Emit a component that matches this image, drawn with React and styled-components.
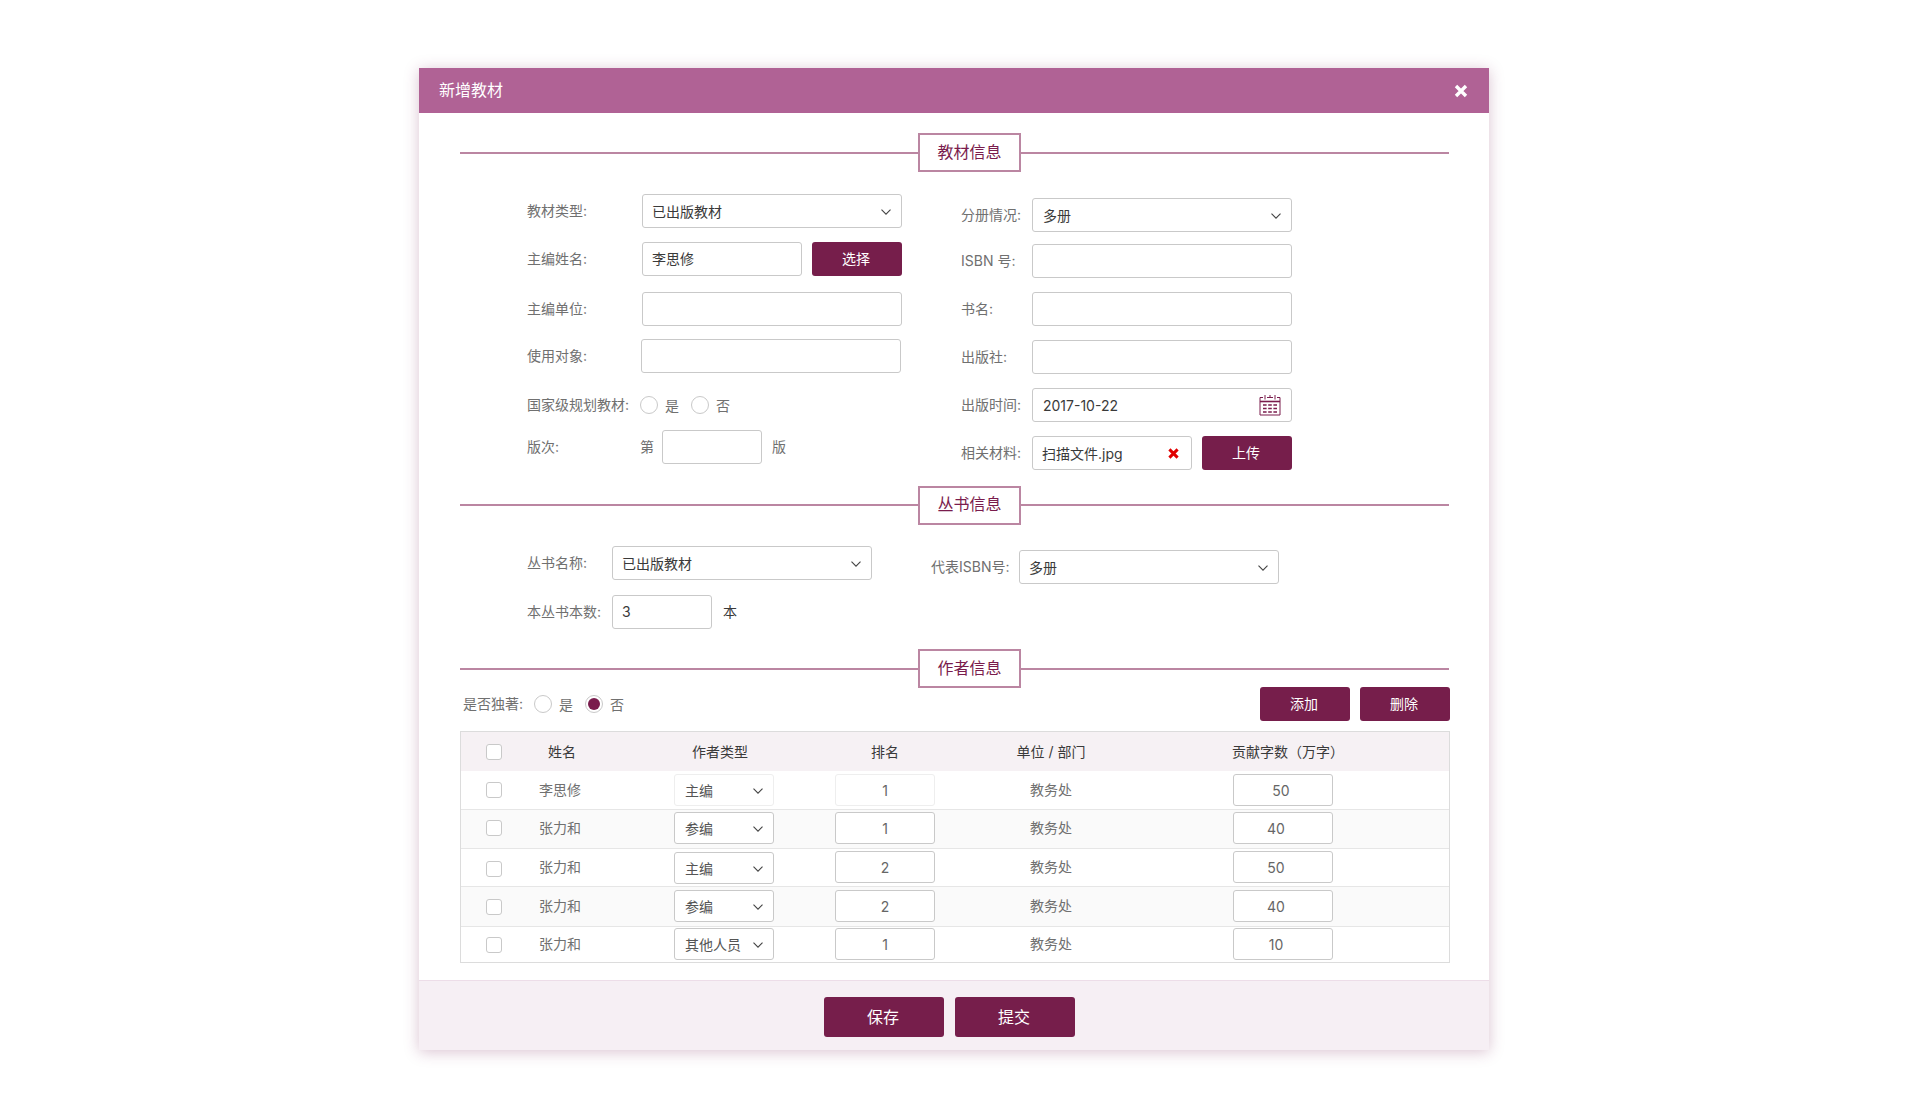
import React from 'react';
import styled, { createGlobalStyle } from 'styled-components';

const Global = createGlobalStyle`
  html, body { margin: 0; padding: 0; background: #fff; }
  body { font-family: Inter, "Noto Sans CJK SC", sans-serif; font-size: 14px; color: #707070; }
`;

const Page = styled.div`
  width: 1920px;
  height: 1117px;
  padding: 68px 0 0 419px;
  box-sizing: border-box;
`;
const Modal = styled.div`
  width: 1070px;
  height: 982px;
  background: #fff;
  display: flex;
  flex-direction: column;
  box-shadow: 0 2px 14px rgba(122, 40, 90, 0.28);
`;
const Header = styled.div`
  height: 45px;
  background: #b06295;
  display: flex;
  align-items: center;
  justify-content: space-between;
  padding: 0 21px 0 20px;
  color: #fff;
  font-size: 16px;
  flex: none;
`;
const HeaderTitle = styled.span`
  margin-bottom: 3px;
`;
const Body = styled.div`
  flex: 1;
  padding: 20px 39px 0 41px;
`;
const SectionHead = styled.div`
  display: flex;
  align-items: flex-start;
  height: 38px;
  padding-right: 1px;
  margin-top: ${p => p.$mt || 0}px;
`;
const SectionLeft = styled.div`
  width: 458px;
  height: 2px;
  margin-top: ${p => p.$low ? 19 : 18}px;
  background: #bb86a2;
`;
const SectionRight = styled(SectionLeft)`
  width: auto;
  flex: 1;
`;
const SectionTitle = styled.div`
  width: 103px;
  height: 39px;
  box-sizing: border-box;
  border: 2px solid #bb86a2;
  color: #7a1c4d;
  font-size: 16px;
  line-height: ${p => p.$low ? 35 : 33}px;
  text-align: center;
  background: #fff;
  position: relative;
`;
const Columns = styled.div`
  display: flex;
  padding-left: 67px;
`;
const Column = styled.div`
  width: ${p => p.$w}px;
  flex: none;
`;
const Row = styled.div`
  display: flex;
  align-items: center;
  height: 34px;
  margin-top: ${p => p.$mt || 0}px;
`;
const Label = styled.label`
  width: ${p => p.$w}px;
  flex: none;
  color: #707070;
  white-space: nowrap;
  margin-bottom: 2px;
`;
const Input = styled.input`
  width: ${p => p.$w || 260}px;
  height: ${p => p.$h || 34}px;
  box-sizing: border-box;
  border: 1px solid ${p => p.$soft ? '#eee' : '#c9c9c9'};
  border-radius: 3px;
  padding: 0 ${p => p.$pr ?? 10}px ${p => p.$h ? 0 : 2}px ${p => p.$h ? 10 : 9}px;
  outline: none;
  background: #fff;
  font: inherit;
  color: ${p => p.$h ? '#666' : '#3a3a3a'};
  text-align: ${p => p.$center ? 'center' : 'left'};
`;
const SelectBox = styled.div`
  width: ${p => p.$w || 260}px;
  height: ${p => p.$h || 34}px;
  box-sizing: border-box;
  border: 1px solid ${p => p.$soft ? '#eee' : '#c9c9c9'};
  border-radius: 3px;
  background: #fff;
  padding: 0 10px 0 ${p => p.$pl || 10}px;
  display: flex;
  align-items: center;
  justify-content: space-between;
  color: ${p => p.$h ? '#555' : '#3a3a3a'};
  margin-top: ${p => p.$dy || 0}px;
`;
const ChevronSlot = styled.span`
  display: flex;
  margin-top: 2px;
`;
const SmallBtn = styled.button`
  width: 90px;
  height: 34px;
  margin-left: ${p => p.$ml || 0}px;
  border: 0;
  border-radius: 3px;
  background: #761e4b;
  color: #fff;
  font: inherit;
  padding: 0 2px 2px 0;
`;
const Unit = styled.span`
  color: ${p => p.$dark ? '#3a3a3a' : '#707070'};
  margin-left: ${p => p.$ml || 0}px;
  margin-right: ${p => p.$mr || 0}px;
  margin-bottom: 2px;
`;
const RadioDot = styled.span`
  width: 18px;
  height: 18px;
  box-sizing: border-box;
  border-radius: 50%;
  border: 1px solid #c9c9c9;
  background: #fff;
  display: inline-flex;
  align-items: center;
  justify-content: center;
  flex: none;
  &::after {
    content: '';
    display: ${p => p.$on ? 'block' : 'none'};
    width: 12px;
    height: 12px;
    border-radius: 50%;
    background: #7a1c4d;
  }
`;
const RadioText = styled.span`
  margin-left: 7px;
  margin-right: 12px;
  color: #707070;
`;
const FileBox = styled.div`
  width: 160px;
  height: 34px;
  box-sizing: border-box;
  border: 1px solid #c9c9c9;
  border-radius: 3px;
  padding: 0 12px 0 9px;
  display: flex;
  align-items: center;
  justify-content: space-between;
  color: #3a3a3a;
`;
const DateBox = styled(SelectBox)`
  padding: 0 10px 0 10px;
`;
const Toolbar = styled.div`
  display: flex;
  align-items: center;
  height: 34px;
  padding-left: 3px;
`;
const ToolRight = styled.div`
  margin-left: auto;
  display: flex;
  gap: 10px;
`;
const Table = styled.div`
  margin-top: 10px;
  border: 1px solid #dcdcdc;
`;
const grid = `
  display: grid;
  grid-template-columns: 66px 97px 200px 122px 210px 254px 1fr;
`;
const HeadRow = styled.div`
  ${grid}
  height: 39px;
  align-items: center;
  background: #f6f1f4;
  color: #3a3a3a;
`;
const HeadCell = styled.div`
  display: flex;
  justify-content: ${p => p.$left ? 'flex-start' : 'center'};
  padding-left: ${p => p.$pl || 0}px;
  padding-right: ${p => p.$pr || 0}px;
  padding-bottom: 2px;
`;
const DataRow = styled.div`
  ${grid}
  box-sizing: border-box;
  height: ${p => p.$h}px;
  padding-top: ${p => p.$pt}px;
  align-items: start;
  background: ${p => p.$alt ? '#fafafa' : '#fff'};
  border-bottom: ${p => p.$last ? 0 : '1px solid #e6e6e6'};
`;
const Cell = styled.div`
  height: 32px;
  display: flex;
  align-items: center;
  justify-content: ${p => p.$left ? 'flex-start' : 'center'};
  padding-left: ${p => p.$pl || 0}px;
  color: #707070;
`;
const CellText = styled.span`
  margin-bottom: 2px;
`;
const Check = styled.span`
  width: 16px;
  height: 16px;
  box-sizing: border-box;
  border: 1px solid #c9c9c9;
  border-radius: 3px;
  background: #fff;
  display: block;
  margin-top: ${p => p.$dy || 0}px;
`;
const Footer = styled.div`
  height: 70px;
  flex: none;
  box-sizing: border-box;
  background: #f6eff4;
  border-top: 1px solid #eddde8;
  display: flex;
  align-items: flex-start;
  padding: 16px 0 0 405px;
  gap: 11px;
`;
const BigBtn = styled.button`
  width: 120px;
  height: 40px;
  border: 0;
  border-radius: 3px;
  background: #761e4b;
  color: #fff;
  font: inherit;
  font-size: 16px;
  padding: 0 2px 2px 0;
`;

const Chevron = () => (
  <ChevronSlot>
    <svg width="10" height="6" viewBox="0 0 10 6" fill="none" stroke="#444" strokeWidth="1.1">
      <path d="M0.5 0.6 L5 5.2 L9.5 0.6" />
    </svg>
  </ChevronSlot>
);
const CloseIcon = () => (
  <svg width="14" height="14" viewBox="0 0 14 14" stroke="#fff" strokeWidth="3.4">
    <path d="M2 2 L12 12 M12 2 L2 12" />
  </svg>
);
const RedX = () => (
  <svg width="11" height="11" viewBox="0 0 11 11" stroke="#e00000" strokeWidth="3">
    <path d="M1.4 1.4 L9.6 9.6 M9.6 1.4 L1.4 9.6" />
  </svg>
);
const Calendar = () => (
  <svg width="22" height="22" viewBox="0 0 22 22" fill="none" stroke="#7a1c4d" strokeWidth="1">
    <path d="M4 3.5 H1 V21 H21 V3.5 H18 M8 3.5 H14" />
    <path d="M6 1 V5.5 M11 1 V4 M16 1 V5.5" />
    <path d="M1 7.5 H21" strokeWidth="1.6" />
    <path d="M4 11 H18 M4 14.5 H18 M4 18 H18" strokeWidth="1.6" strokeDasharray="3.6 1.6" />
  </svg>
);

const Select = ({ children, ...rest }) => (
  <SelectBox {...rest}>
    <span>{children}</span>
    <Chevron />
  </SelectBox>
);

const Heading = ({ children, mt, low }) => (
  <SectionHead $mt={mt}>
    <SectionLeft $low={low} />
    <SectionTitle $low={low}>{children}</SectionTitle>
    <SectionRight $low={low} />
  </SectionHead>
);

const Radio = ({ on, children }) => (
  <>
    <RadioDot $on={on} />
    <RadioText>{children}</RadioText>
  </>
);

const rows = [
  { name: '李思修', type: '主编', rank: '1', words: '50', h: 39, pt: 3, soft: true, selSoft: true, wordsPr: 14 },
  { name: '张力和', type: '参编', rank: '1', words: '40', h: 39, pt: 2, alt: true, wordsPr: 24 },
  { name: '张力和', type: '主编', rank: '2', words: '50', h: 38, pt: 2, selDy: 1, checkDy: 3, wordsPr: 24 },
  { name: '张力和', type: '参编', rank: '2', words: '40', h: 40, pt: 3, alt: true, checkDy: 1, wordsPr: 24 },
  { name: '张力和', type: '其他人员', rank: '1', words: '10', h: 35, pt: 1, last: true, checkDy: 1, wordsPr: 24 },
];

export default function App() {
  return (
    <Page>
      <Global />
      <Modal>
        <Header>
          <HeaderTitle>新增教材</HeaderTitle>
          <CloseIcon />
        </Header>
        <Body>
          <Heading low>教材信息</Heading>
          <Columns>
            <Column $w={434}>
              <Row $mt={23}><Label $w={115}>教材类型:</Label><Select $pl={9}>已出版教材</Select></Row>
              <Row $mt={14}>
                <Label $w={115}>主编姓名:</Label>
                <Input $w={160} defaultValue="李思修" readOnly />
                <SmallBtn $ml={10}>选择</SmallBtn>
              </Row>
              <Row $mt={16}><Label $w={115}>主编单位:</Label><Input readOnly /></Row>
              <Row $mt={13}><Label $w={114}>使用对象:</Label><Input readOnly /></Row>
              <Row $mt={15}>
                <Label $w={113}>国家级规划教材:</Label>
                <Radio>是</Radio>
                <Radio>否</Radio>
              </Row>
              <Row $mt={8}>
                <Label $w={113}>版次:</Label>
                <Unit $mr={8}>第</Unit>
                <Input $w={100} readOnly />
                <Unit $ml={10}>版</Unit>
              </Row>
            </Column>
            <Column $w={331}>
              <Row $mt={27}><Label $w={71}>分册情况:</Label><Select>多册</Select></Row>
              <Row $mt={12}><Label $w={71}>ISBN 号:</Label><Input readOnly /></Row>
              <Row $mt={14}><Label $w={71}>书名:</Label><Input readOnly /></Row>
              <Row $mt={14}><Label $w={71}>出版社:</Label><Input readOnly /></Row>
              <Row $mt={14}>
                <Label $w={71}>出版时间:</Label>
                <DateBox><span>2017-10-22</span><Calendar /></DateBox>
              </Row>
              <Row $mt={14}>
                <Label $w={71}>相关材料:</Label>
                <FileBox><span>扫描文件.jpg</span><RedX /></FileBox>
                <SmallBtn $ml={10}>上传</SmallBtn>
              </Row>
            </Column>
          </Columns>
          <Heading mt={16}>丛书信息</Heading>
          <Columns>
            <Column $w={404}>
              <Row $mt={22}><Label $w={85}>丛书名称:</Label><Select $pl={9}>已出版教材</Select></Row>
              <Row $mt={15}>
                <Label $w={85}>本丛书本数:</Label>
                <Input $w={100} defaultValue="3" readOnly />
                <Unit $dark $ml={11}>本</Unit>
              </Row>
            </Column>
            <Column $w={348}>
              <Row $mt={26}><Label $w={88}>代表ISBN号:</Label><Select $pl={9}>多册</Select></Row>
            </Column>
          </Columns>
          <Heading mt={20} low>作者信息</Heading>
          <Toolbar>
            <Label $w={71}>是否独著:</Label>
            <Radio>是</Radio>
            <Radio on>否</Radio>
            <ToolRight>
              <SmallBtn>添加</SmallBtn>
              <SmallBtn>删除</SmallBtn>
            </ToolRight>
          </Toolbar>
          <Table>
            <HeadRow>
              <HeadCell><Check $dy={2} /></HeadCell>
              <HeadCell $left $pl={21}>姓名</HeadCell>
              <HeadCell $pr={8}>作者类型</HeadCell>
              <HeadCell>排名</HeadCell>
              <HeadCell>单位 / 部门</HeadCell>
              <HeadCell $pl={10}>贡献字数（万字）</HeadCell>
              <div />
            </HeadRow>
            {rows.map((r, i) => (
              <DataRow key={i} $h={r.h} $pt={r.pt} $alt={r.alt} $last={r.last}>
                <Cell><Check $dy={r.checkDy} /></Cell>
                <Cell $left $pl={12}><CellText>{r.name}</CellText></Cell>
                <Cell>
                  <Select $w={100} $h={32} $soft={r.selSoft} $dy={r.selDy}>{r.type}</Select>
                </Cell>
                <Cell>
                  <Input $w={100} $h={32} $center $soft={r.soft} defaultValue={r.rank} readOnly />
                </Cell>
                <Cell><CellText>教务处</CellText></Cell>
                <Cell>
                  <Input $w={100} $h={32} $center $pr={r.wordsPr} defaultValue={r.words} readOnly />
                </Cell>
                <div />
              </DataRow>
            ))}
          </Table>
        </Body>
        <Footer>
          <BigBtn>保存</BigBtn>
          <BigBtn>提交</BigBtn>
        </Footer>
      </Modal>
    </Page>
  );
}
